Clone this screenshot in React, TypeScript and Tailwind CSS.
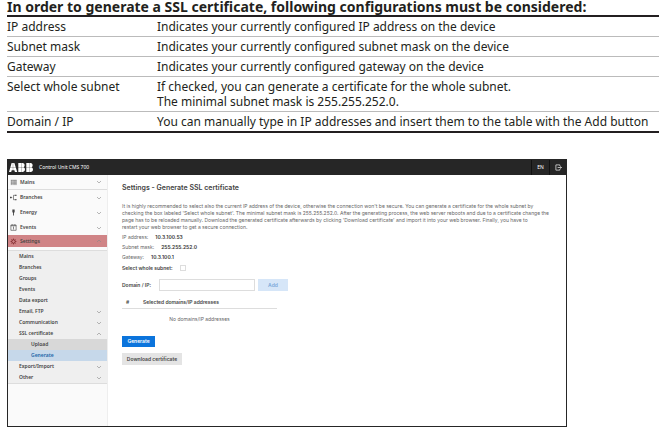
import type { ReactNode } from "react";

const config: { name: string; text: string[] }[] = [
  { name: "IP address", text: ["Indicates your currently configured IP address on the device"] },
  { name: "Subnet mask", text: ["Indicates your currently configured subnet mask on the device"] },
  { name: "Gateway", text: ["Indicates your currently configured gateway on the device"] },
  {
    name: "Select whole subnet",
    text: ["If checked, you can generate a certificate for the whole subnet.", "The minimal subnet mask is 255.255.252.0."],
  },
  { name: "Domain / IP", text: ["You can manually type in IP addresses and insert them to the table with the Add button"] },
];

function Chevron({ up = false }: { up?: boolean }) {
  return (
    <svg viewBox="0 0 6 4" className="h-1 w-[6px] shrink-0" fill="none" stroke="#888" strokeWidth="0.6" aria-hidden="true">
      <path d={up ? "M1 3 3 1 5 3" : "M1 1 3 3 5 1"} />
    </svg>
  );
}

const glyphs: Record<string, ReactNode> = {
  Mains: <path d="M1.500 1V7M3.500 1V7M5.500 1V7M7 1V7M1 1.500H7.500M1 3.500H7.500M1 5.500H7.500" strokeWidth="0.5" />,
  Branches: (
    <>
      <path d="M1 4H2.500M6.500 1.500H4V6.500H6.500" />
      <path d="M0 3.200h1.700v1.700H0zM6 .8h1.400v1.400H6zM6 5.800h1.400v1.400H6z" fill="#444" stroke="none" />
    </>
  ),
  Energy: <path d="M2.700 .5H5.300V3.500L4.500 4.500V7.500H3.500V4.500L2.700 3.500Z" fill="#444" stroke="none" />,
  Events: <path d="M1 1.200H7V7.200H1ZM1 2H7M2.500 .3V1.500M5.500 .3V1.500M4 3.200V6.300M3.400 3.700 4 3.300" />,
  Settings: (
    <>
      <circle cx="4" cy="4" r="2" strokeWidth="1" />
      <path d="M4 .7V2M4 6V7.300M.7 4H2M6 4H7.300M1.700 1.700l.8.8M5.500 5.500l.8.8M1.700 6.300l.8-.8M5.500 2.500l.8-.8" strokeWidth="0.9" />
    </>
  ),
};

const sections = ["Mains", "Branches", "Energy", "Events", "Settings"];

const subItems: { label: string; arrow?: "up" | "down"; tone?: string }[] = [
  { label: "Mains" },
  { label: "Branches" },
  { label: "Groups" },
  { label: "Events" },
  { label: "Data export" },
  { label: "Email, FTP", arrow: "down" },
  { label: "Communication", arrow: "down" },
  { label: "SSL certificate", arrow: "up" },
  { label: "Upload", tone: "bg-[#d8d8d8] pl-[23px]" },
  { label: "Generate", tone: "bg-[#c6d8ea] pl-[23px] text-[#2264a8]" },
  { label: "Export/Import", arrow: "down" },
  { label: "Other", arrow: "down" },
];

function Logo() {
  return (
    <svg viewBox="0 0 24 9" className="h-[9px] w-6" role="img" aria-label="ABB">
      <g fill="#fff">
        <path d="M2.600 0H5.400L8.200 9H5.900L5.400 7.300H2.700L2.200 9H0Z" />
        <path d="M9.300 0H13.500C16 0 16.200 3.400 14.700 4.300C16.700 5.200 16.400 9 13.500 9H9.300Z" />
        <path d="M17.300 0H21.500C24 0 24.200 3.400 22.700 4.300C24.700 5.200 24.400 9 21.500 9H17.300Z" />
      </g>
      <path d="M0 4.500H24M4 0V9M12.500 0V9M20.500 0V9" stroke="#262626" strokeWidth="0.25" />
    </svg>
  );
}

function Sidebar() {
  return (
    <nav className="w-[100px] shrink-0 border-r border-[#eee] bg-[#fafafa] font-semibold text-[#444]">
      <ul className="pb-[3px]">
        {sections.map((label) => (
          <li
            key={label}
            className={
              label === "Mains"
                ? "flex h-[15px] border-b border-[#ddd]"
                : label === "Settings"
                  ? "flex h-3 bg-[#d08486]"
                  : "flex h-[15px]"
            }
          >
            <button type="button" className="flex w-full items-center pr-[5px] pl-[2px]">
              <svg viewBox="0 0 8 8" className="mr-[3px] size-[7px]" fill="none" stroke={label === "Settings" ? "#7a2226" : "#444"} strokeWidth="0.7" aria-hidden="true">
                {glyphs[label]}
              </svg>
              <span className="flex-1 text-left">{label}</span>
              <Chevron up={label === "Settings"} />
            </button>
          </li>
        ))}
      </ul>
      <ul className="border-y border-[#ddd] bg-[#efefef]">
        {subItems.map((item) => (
          <li key={item.label}>
            <button type="button" className={`flex h-[11px] w-full items-center pr-[5px] ${item.tone ?? "pl-[11px]"}`}>
              <span className="flex-1 text-left">{item.label}</span>
              {item.arrow && <Chevron up={item.arrow === "up"} />}
            </button>
          </li>
        ))}
      </ul>
    </nav>
  );
}

function Field({ name, value }: { name: string; value: string }) {
  return (
    <div className="flex h-[10px] items-center gap-[7px]">
      <dt>{name}</dt>
      <dd className="font-semibold text-[#333]">{value}</dd>
    </div>
  );
}

function Content() {
  return (
    <main className="min-w-0 flex-1 pt-2 pr-3 pl-[14px] font-[Inter,sans-serif] text-[#666]">
      <h2 className="text-[7px] leading-[10px] font-semibold text-[#444]">Settings - Generate SSL certificate</h2>
      <p className="mt-[10px] leading-[7px] whitespace-nowrap">
        It is highly recommended to select also the current IP address of the device, otherwise the connection won't be secure. You can generate a certificate for the whole subnet by
        <br />
        checking the box labeled 'Select whole subnet'. The minimal subnet mask is 255.255.252.0. After the generating process, the web server reboots and due to a certificate change the
        <br />
        page has to be reloaded manually. Download the generated certificate afterwards by clicking 'Download certificate' and import it into your web browser. Finally, you have to
        <br />
        restart your web browser to get a secure connection.
      </p>
      <dl className="mt-px">
        <Field name="IP address:" value="10.3.100.53" />
        <Field name="Subnet mask:" value="255.255.252.0" />
        <Field name="Gateway:" value="10.3.100.1" />
      </dl>
      <div className="flex h-3 items-center gap-[7px] font-semibold text-[#444]">
        <label htmlFor="whole">Select whole subnet:</label>
        <input id="whole" type="checkbox" className="size-[6px] appearance-none border border-[#ddd] bg-white" />
      </div>
      <div className="mt-[5px] flex items-center font-semibold text-[#444]">
        <label htmlFor="domain" className="w-[37px]">
          Domain / IP:
        </label>
        <input id="domain" type="text" className="h-3 w-24 border border-[#ddd] bg-white px-1" />
        <button type="button" className="ml-[3px] h-3 w-[30px] bg-[#d6e6f8] text-[#7da9d8]">
          Add
        </button>
      </div>
      <table className="mt-[6px] w-[155px] text-left">
        <thead>
          <tr className="h-[11px] border-b border-[#ddd] text-[#444]">
            <th className="w-[21px] pl-1 font-semibold">#</th>
            <th className="font-semibold">Selected domains/IP addresses</th>
          </tr>
        </thead>
        <tbody>
          <tr className="h-[22px]">
            <td colSpan={2} className="text-center">
              No domains/IP addresses
            </td>
          </tr>
        </tbody>
      </table>
      <div className="mt-[6px] flex flex-col items-start gap-[6px] font-semibold">
        <button type="button" className="h-[11px] w-[33px] bg-[#0b74dc] text-white">
          Generate
        </button>
        <button type="button" className="h-3 w-[60px] bg-[#e4e4e4] text-[#444]">
          Download certificate
        </button>
      </div>
    </main>
  );
}

export default function App() {
  return (
    <div className="overflow-hidden bg-white pl-[7px] font-['Noto_Sans',sans-serif] text-[#231f20]">
      <section>
        <h1 className="h-[15px] text-[14px] leading-[14px] font-bold whitespace-nowrap">
          In order to generate a SSL certificate, following configurations must be considered:
        </h1>
        <table className="w-full border-y-2 border-[#231f20] text-[12px] leading-[15px]">
          <tbody>
            {config.map((row) => (
              <tr key={row.name} className="border-b border-[#bbb] align-top last:border-b-0">
                <th scope="row" className="w-[150px] py-[2px] text-left font-normal">
                  {row.name}
                </th>
                <td className="py-[2px] whitespace-nowrap">
                  {row.text.map((line) => (
                    <div key={line}>{line}</div>
                  ))}
                </td>
              </tr>
            ))}
          </tbody>
        </table>
      </section>
      <section className="mt-[26px] flex w-full max-w-[560px] flex-col border border-[#262626] text-[5px] leading-[7px]">
        <header className="flex h-[15px] items-center bg-[#262626] text-white">
          <div className="flex flex-1 items-center gap-[6px] pl-px">
            <Logo />
            <span>Control Unit CMS 700</span>
          </div>
          <button type="button" className="h-full w-[18px] border-l border-[#111]">
            EN
          </button>
          <button type="button" aria-label="Log out" className="flex h-full w-[17px] items-center justify-center border-l border-[#111]">
            <svg viewBox="0 0 8 8" className="size-[7px]" fill="none" stroke="#ddd" strokeWidth="0.9" aria-hidden="true">
              <path d="M5.500 2.300V1H1V7H5.500V5.700M3 4H7.500M6 2.700 7.400 4 6 5.300" />
            </svg>
          </button>
        </header>
        <div className="flex min-h-[251px]">
          <Sidebar />
          <Content />
        </div>
      </section>
    </div>
  );
}
